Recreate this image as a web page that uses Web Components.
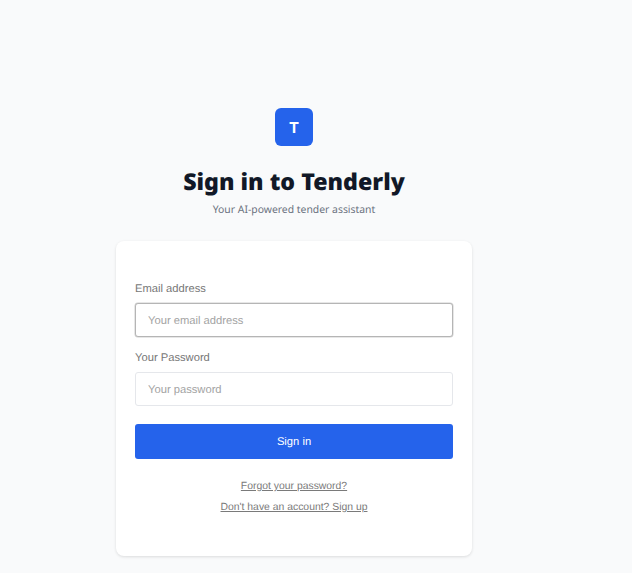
<!DOCTYPE html>
<html lang="en">
<head>
<meta charset="utf-8">
<title>Sign in to Tenderly</title>
<style>
  html, body { margin: 0; height: 100%; background: #f9fafb; overflow: hidden; text-rendering: geometricPrecision; }
</style>
</head>
<body>
<login-page></login-page>

<template id="brand-header-tpl">
  <style>
    :host { display: flex; flex-direction: column; align-items: center; }
    .logo {
      width: 38px; height: 38px; border-radius: 6px; background: #2563eb; color: #fff;
      display: flex; align-items: center; justify-content: center;
      font: 700 15px Inter, sans-serif;
    }
    h1 {
      margin: 17px 0 0; font: 900 23.2px/36px "Noto Sans", sans-serif; color: #111827;
    }
    p {
      margin: 2px 0 0; font: 400 10.4px/18px "Noto Sans", sans-serif; color: #6b7280;
    }
  </style>
  <div class="logo">T</div>
  <h1><slot name="title"></slot></h1>
  <p><slot name="subtitle"></slot></p>
</template>

<template id="text-field-tpl">
  <style>
    :host { display: block; }
    label { display: block; font: 400 11.2px/18px "Liberation Sans", sans-serif; color: #777; padding-top: 1px; margin-bottom: 5px; }
    input {
      display: block; box-sizing: border-box; width: 100%; height: 33.5px; padding: 2px 12px 0;
      background: #fff; border: 1px solid #e5e7eb; border-radius: 3px; outline: none;
      font: 400 11.2px "Liberation Sans", sans-serif; color: #111827;
      text-rendering: geometricPrecision;
    }
    input::placeholder { color: #a3a3a3; opacity: 1; }
    :host([focused]) input { border-color: #b5b5b5; box-shadow: 0 0 0 .5px #d0d0d0; }
  </style>
  <label></label>
  <input>
</template>

<template id="login-card-tpl">
  <style>
    :host {
      display: flex; flex-direction: column; box-sizing: border-box; width: 356px; height: 315px;
      padding: 38px 19px 0; background: #fff; border-radius: 8px;
      box-shadow: 0 1px 3px rgba(0,0,0,.12);
    }
    .fields { display: flex; flex-direction: column; gap: 11.5px; }
    button {
      margin-top: 18.5px; height: 35px; border: 0; border-radius: 3px; background: #2563eb; color: #fff;
      font: 400 11.2px "Liberation Sans", sans-serif;
      text-rendering: geometricPrecision;
    }
    .links { display: flex; flex-direction: column; align-items: center; gap: 6px; margin-top: 20px; }
    a { font: 400 10.4px/15px "Liberation Sans", sans-serif; color: #7a7a7a; text-decoration: underline; }
  </style>
  <div class="fields"><slot></slot></div>
  <button type="button">Sign in</button>
  <div class="links">
    <a href="#">Forgot your password?</a>
    <a href="#">Don't have an account? Sign up</a>
  </div>
</template>

<template id="login-page-tpl">
  <style>
    :host {
      display: flex; flex-direction: column; align-items: center; box-sizing: border-box;
      width: 588px; padding-top: 108px;
    }
    login-card { margin-top: 22px; }
  </style>
  <brand-header>
    <span slot="title">Sign in to Tenderly</span>
    <span slot="subtitle">Your AI-powered tender assistant</span>
  </brand-header>
  <login-card>
    <text-field label="Email address" placeholder="Your email address" type="email" focused></text-field>
    <text-field label="Your Password" placeholder="Your password" type="password"></text-field>
  </login-card>
</template>

<script>
  // stamps a template into an open shadow root
  class TemplateElement extends HTMLElement {
    constructor(id) {
      super();
      this.attachShadow({ mode: 'open' });
      this.shadowRoot.append(document.getElementById(id).content.cloneNode(true));
    }
  }

  class BrandHeader extends TemplateElement {
    constructor() { super('brand-header-tpl'); }
  }

  class TextField extends TemplateElement {
    constructor() { super('text-field-tpl'); }
    connectedCallback() {
      this.shadowRoot.querySelector('label').textContent = this.getAttribute('label');
      const input = this.shadowRoot.querySelector('input');
      input.placeholder = this.getAttribute('placeholder');
      input.type = this.getAttribute('type') || 'text';
    }
  }

  class LoginCard extends TemplateElement {
    constructor() { super('login-card-tpl'); }
  }

  class LoginPage extends TemplateElement {
    constructor() { super('login-page-tpl'); }
  }

  customElements.define('brand-header', BrandHeader);
  customElements.define('text-field', TextField);
  customElements.define('login-card', LoginCard);
  customElements.define('login-page', LoginPage);
</script>
</body>
</html>
